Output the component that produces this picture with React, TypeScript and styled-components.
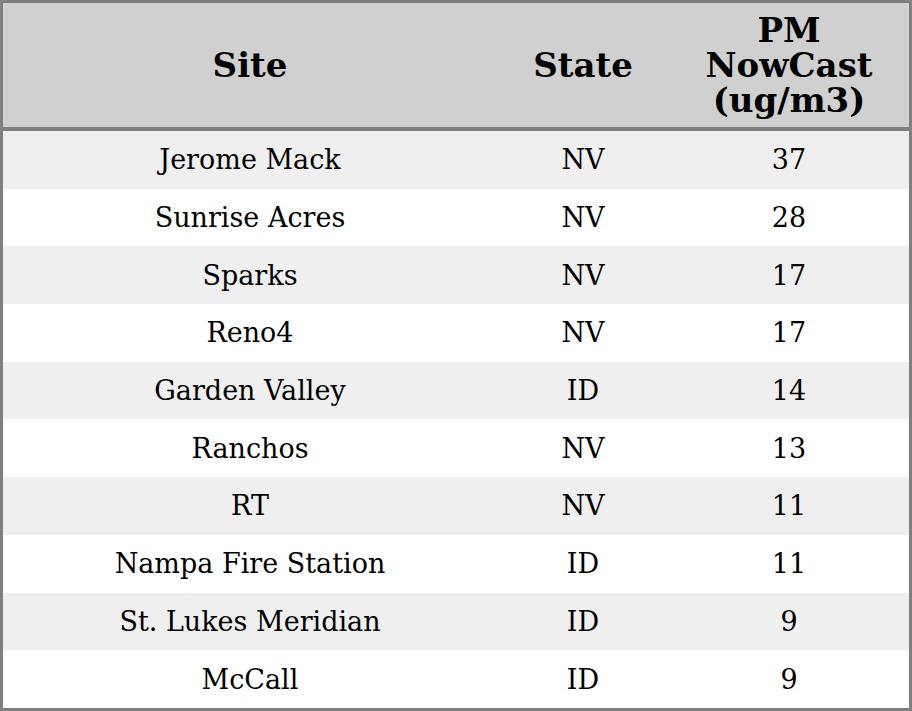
import React from 'react'
import styled, { createGlobalStyle } from 'styled-components'

type Reading = {
    site: string
    state: string
    pm: number
}

const Global = createGlobalStyle`
    html, body {
        margin: 0;
        padding: 0;
        background: #ffffff;
    }
`

const Frame = styled.div`
    width: 912px;
    height: 711px;
    box-sizing: border-box;
    border: 3px solid #808080;
    font-family: 'DejaVu Serif', 'Liberation Serif', serif;
    color: #000;
`

const Table = styled.table`
    width: 100%;
    border-collapse: separate;
    border-spacing: 0;
    table-layout: fixed;
`

const HeadCell = styled.th<{ $w: number }>`
    width: ${p => p.$w}px;
    height: 128px;
    padding: 0;
    box-sizing: border-box;
    background: #d0d0d0;
    border-bottom: 4px solid #808080;
    font-size: 34px;
    font-weight: bold;
    line-height: 35px;
    text-align: center;
    vertical-align: middle;
`

const Row = styled.tr<{ $odd: boolean }>`
    height: 57.7px;
    background: ${p => (p.$odd ? '#efefef' : '#ffffff')};
`

const Cell = styled.td`
    padding: 0;
    font-size: 27px;
    text-align: center;
    vertical-align: middle;
`

const readings: Reading[] = [
    { site: 'Jerome Mack', state: 'NV', pm: 37 },
    { site: 'Sunrise Acres', state: 'NV', pm: 28 },
    { site: 'Sparks', state: 'NV', pm: 17 },
    { site: 'Reno4', state: 'NV', pm: 17 },
    { site: 'Garden Valley', state: 'ID', pm: 14 },
    { site: 'Ranchos', state: 'NV', pm: 13 },
    { site: 'RT', state: 'NV', pm: 11 },
    { site: 'Nampa Fire Station', state: 'ID', pm: 11 },
    { site: 'St. Lukes Meridian', state: 'ID', pm: 9 },
    { site: 'McCall', state: 'ID', pm: 9 },
]

const App = () => {
    return (
        <>
            <Global />
            <Frame>
                <Table>
                    <thead>
                        <tr>
                            <HeadCell $w={494}>Site</HeadCell>
                            <HeadCell $w={172}>State</HeadCell>
                            <HeadCell $w={240}>
                                PM
                                <br />
                                NowCast
                                <br />
                                (ug/m3)
                            </HeadCell>
                        </tr>
                    </thead>
                    <tbody>
                        {readings.map((r, i) => (
                            <Row key={r.site} $odd={i % 2 === 0}>
                                <Cell>{r.site}</Cell>
                                <Cell>{r.state}</Cell>
                                <Cell>{r.pm}</Cell>
                            </Row>
                        ))}
                    </tbody>
                </Table>
            </Frame>
        </>
    )
}

export default App
